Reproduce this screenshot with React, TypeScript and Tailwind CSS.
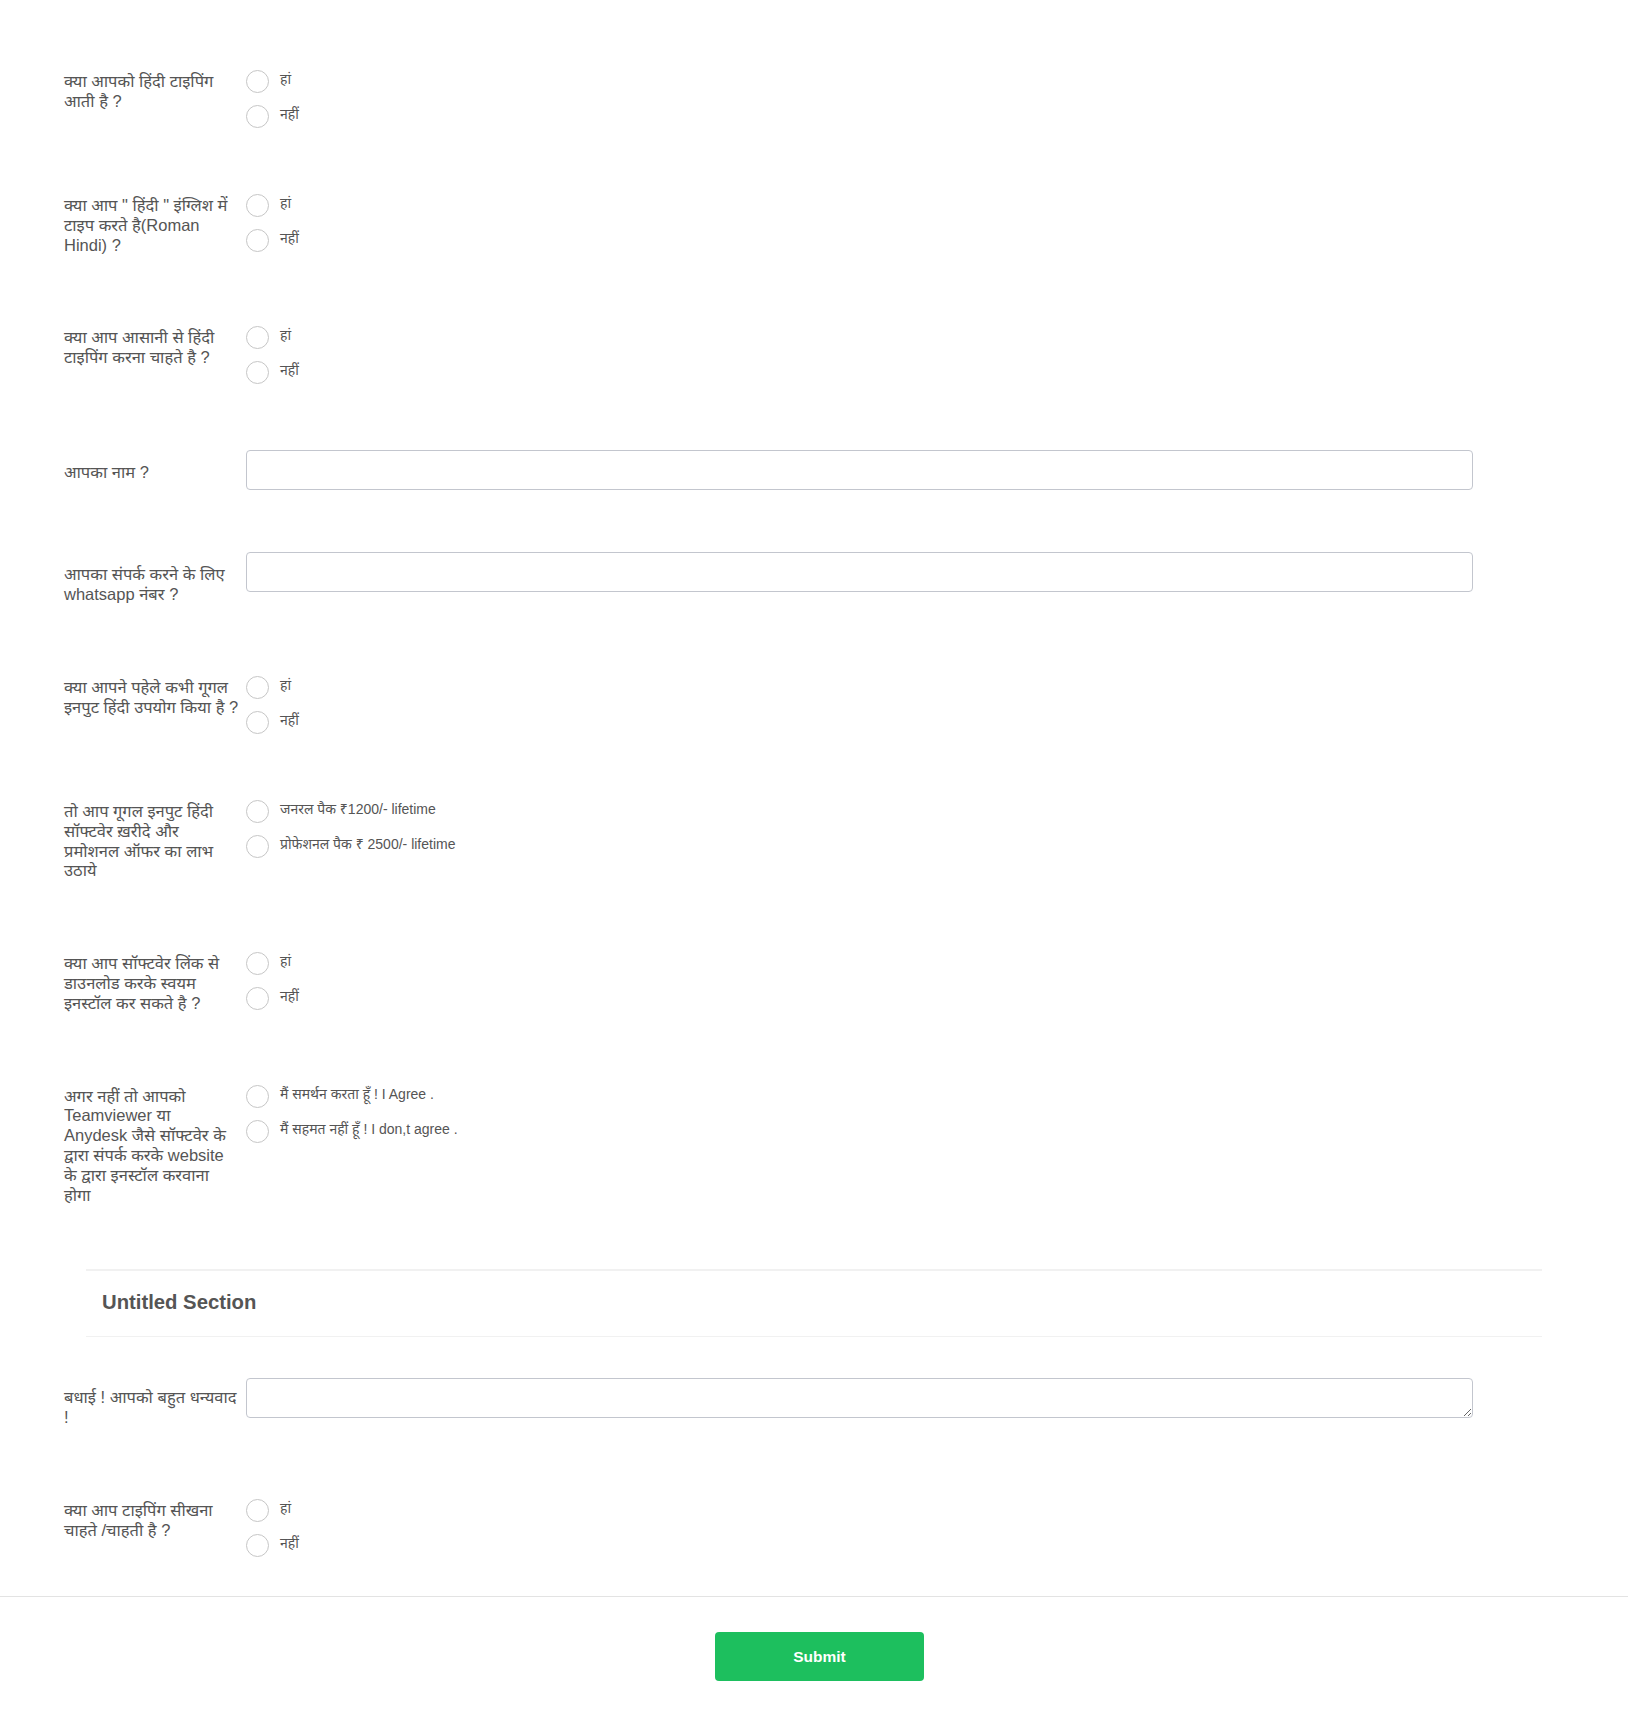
import React from "react";

type RadioRow = { kind: "radio"; label: string[]; options: string[]; mb?: string };
type InputRow = { kind: "input"; label: string[]; mb?: string };
type Row = RadioRow | InputRow;

const YN = ["हां", "नहीं"];

const rowsTop: Row[] = [
  { kind: "radio", label: ["क्या आपको हिंदी टाइपिंग", "आती है ?"], options: YN },
  { kind: "radio", label: ["क्या आप \" हिंदी \" इंग्लिश में", "टाइप करते है(Roman", "Hindi) ?"], options: YN },
  { kind: "radio", label: ["क्या आप आसानी से हिंदी", "टाइपिंग करना चाहते है ?"], options: YN },
  { kind: "input", label: ["आपका नाम ?"], mb: "mb-[62px]" },
  { kind: "input", label: ["आपका संपर्क करने के लिए", "whatsapp नंबर ?"] },
  { kind: "radio", label: ["क्या आपने पहेले कभी गूगल", "इनपुट हिंदी उपयोग किया है ?"], options: YN },
  {
    kind: "radio",
    label: ["तो आप गूगल इनपुट हिंदी", "सॉफ्टवेर ख़रीदे और", "प्रमोशनल ऑफर का लाभ", "उठाये"],
    options: ["जनरल पैक ₹1200/- lifetime", "प्रोफेशनल पैक ₹ 2500/- lifetime"],
  },
  {
    kind: "radio",
    label: ["क्या आप सॉफ्टवेर लिंक से", "डाउनलोड करके स्वयम", "इनस्टॉल कर सकते है ?"],
    options: YN,
  },
  {
    kind: "radio",
    label: [
      "अगर नहीं तो आपको",
      "Teamviewer या",
      "Anydesk जैसे सॉफ्टवेर के",
      "द्वारा संपर्क करके website",
      "के द्वारा इनस्टॉल करवाना",
      "होगा",
    ],
    options: ["मैं समर्थन करता हूँ ! I Agree .", "मैं सहमत नहीं हूँ ! I don,t agree ."],
    mb: "mb-0",
  },
];

function Label({ lines, top }: { lines: string[]; top: string }) {
  return (
    <div className={`w-[182px] shrink-0 ${top} pb-[5px] text-[16.5px] leading-[19.8px] text-[#555]`}>
      {lines.map((l, i) => (
        <div key={i} className="whitespace-nowrap">
          {l}
        </div>
      ))}
    </div>
  );
}

function Radios({ options }: { options: string[] }) {
  return (
    <div className="flex flex-col gap-[12px]">
      {options.map((o, i) => (
        <label key={i} className="flex items-start gap-[11px] cursor-pointer">
          <span className="block w-[23px] h-[23px] rounded-full border-[1.5px] border-[#c6c6c6] bg-white shrink-0" />
          <span className="text-[14px] leading-[18px] text-[#555] whitespace-nowrap">{o}</span>
        </label>
      ))}
    </div>
  );
}

function FormRow({ row }: { row: Row }) {
  const mb = row.mb ?? "mb-[66px]";
  if (row.kind === "radio") {
    return (
      <div className={`flex items-start ${mb}`}>
        <Label lines={row.label} top="pt-[2px]" />
        <Radios options={row.options} />
      </div>
    );
  }
  return (
    <div className={`flex items-start ${mb}`}>
      <Label lines={row.label} top="pt-[13px]" />
      <input
        type="text"
        className="w-[1227px] h-[40px] rounded-[4px] border border-[#c3c6ce] bg-white outline-none px-3 text-[15px]"
      />
    </div>
  );
}

export default function App() {
  return (
    <div
      className="min-h-[1726px] w-full bg-white text-[#555]"
      style={{ fontFamily: '"Liberation Sans", Arial, "Noto Sans", sans-serif' }}
    >
      <div className="pt-[70px] pl-[64px]">
        {rowsTop.map((r, i) => (
          <FormRow key={i} row={r} />
        ))}
      </div>

      <div className="mt-[59px] mx-[86px] h-[68px] border-t-2 border-b border-[#f1f1f1] flex items-center pl-[16px] pb-[4px]">
        <h2 className="text-[20.3px] font-bold text-[#555] leading-none">Untitled Section</h2>
      </div>

      <div className="pt-[41px] pl-[64px] pb-[39px]">
        <div className="flex items-start mb-[66px]">
          <Label lines={["बधाई ! आपको बहुत धन्यवाद", "!"]} top="pt-[10px]" />
          <textarea className="w-[1227px] h-[40px] rounded-[4px] border border-[#c3c6ce] bg-white outline-none px-3 text-[15px]" />
        </div>
        <div className="flex items-start">
          <Label lines={["क्या आप टाइपिंग सीखना", "चाहते /चाहती है ?"]} top="pt-[2px]" />
          <Radios options={YN} />
        </div>
      </div>

      <div className="border-t border-[#e3e3e3] pt-[35px] pb-[46px] flex justify-center pl-[11px]">
        <button className="w-[209px] h-[49px] rounded-[4px] bg-[#1dbf5e] text-white text-[15.5px] font-bold">
          Submit
        </button>
      </div>
    </div>
  );
}
